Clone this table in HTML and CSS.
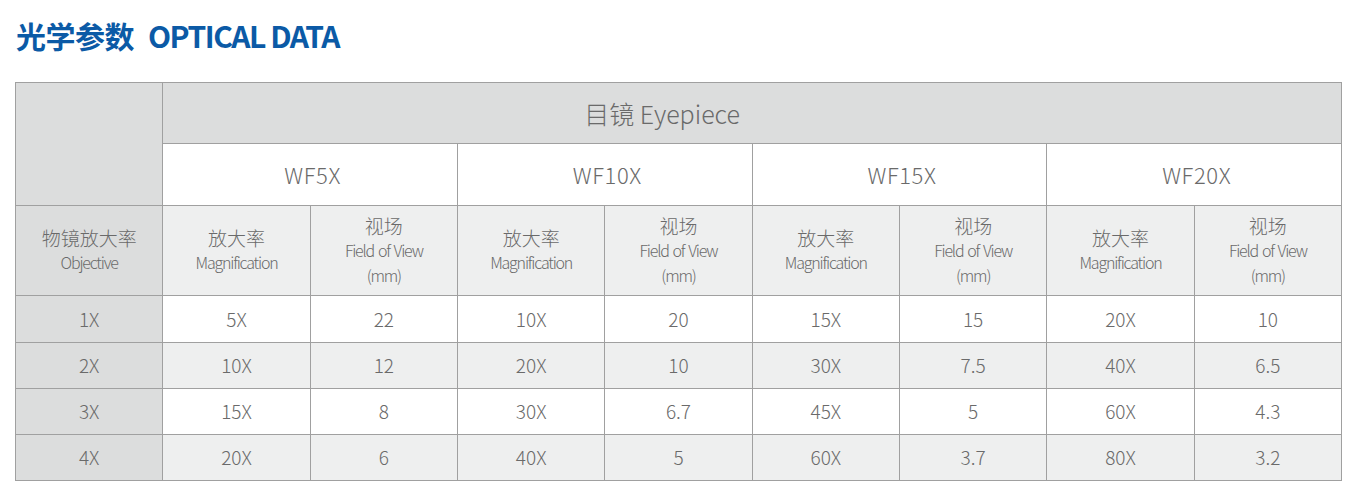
FILE: index.html
```html
<!DOCTYPE html>
<html lang="zh">
<head>
<meta charset="utf-8">
<link rel="stylesheet" href="styles.css">
</head>
<body>
<h1 class="title"><span class="title-cn">光学参数</span><span class="title-en">OPTICAL DATA</span></h1>
<table class="optics">
  <colgroup>
    <col><col><col><col><col><col><col><col><col>
  </colgroup>
  <tr class="r-eyepiece">
    <td class="corner" rowspan="2"></td>
    <td class="eyepiece" colspan="8">目镜 Eyepiece</td>
  </tr>
  <tr class="r-wf">
    <td colspan="2">WF5X</td>
    <td colspan="2">WF10X</td>
    <td colspan="2">WF15X</td>
    <td colspan="2">WF20X</td>
  </tr>
  <tr class="r-sub">
    <td class="obj"><div class="cn">物镜放大率</div><div class="en">Objective</div></td>
    <td><div class="cn">放大率</div><div class="en">Magnification</div></td>
    <td><div class="cn">视场</div><div class="en">Field of View</div><div class="en">(mm)</div></td>
    <td><div class="cn">放大率</div><div class="en">Magnification</div></td>
    <td><div class="cn">视场</div><div class="en">Field of View</div><div class="en">(mm)</div></td>
    <td><div class="cn">放大率</div><div class="en">Magnification</div></td>
    <td><div class="cn">视场</div><div class="en">Field of View</div><div class="en">(mm)</div></td>
    <td><div class="cn">放大率</div><div class="en">Magnification</div></td>
    <td><div class="cn">视场</div><div class="en">Field of View</div><div class="en">(mm)</div></td>
  </tr>
  <tr class="r-data r-first">
    <td class="obj">1X</td><td>5X</td><td>22</td><td>10X</td><td>20</td><td>15X</td><td>15</td><td>20X</td><td>10</td>
  </tr>
  <tr class="r-data alt">
    <td class="obj">2X</td><td>10X</td><td>12</td><td>20X</td><td>10</td><td>30X</td><td>7.5</td><td>40X</td><td>6.5</td>
  </tr>
  <tr class="r-data">
    <td class="obj">3X</td><td>15X</td><td>8</td><td>30X</td><td>6.7</td><td>45X</td><td>5</td><td>60X</td><td>4.3</td>
  </tr>
  <tr class="r-data alt">
    <td class="obj">4X</td><td>20X</td><td>6</td><td>40X</td><td>5</td><td>60X</td><td>3.7</td><td>80X</td><td>3.2</td>
  </tr>
</table>
</body>
</html>
```
FILE: styles.css
```css
html, body {
  margin: 0;
  padding: 0;
  background: #ffffff;
}
body {
  padding: 0 12px 0 15px;
  font-family: "Noto Sans CJK SC", "Noto Sans", sans-serif;
  color: #6a6a6a;
}
.title {
  margin: 0;
  height: 82px;
  box-sizing: border-box;
  padding: 15px 0 0 1px;
  font-family: "Noto Sans CJK SC", sans-serif;
  font-size: 30px;
  line-height: 40px;
  color: #0b5aa6;
  font-weight: 700;
  white-space: nowrap;
}
.title-cn {
  letter-spacing: -0.5px;
}
.title-en {
  letter-spacing: -1.5px;
  margin-left: 14px;
}
.optics {
  width: 1326px;
  border-collapse: collapse;
  table-layout: fixed;
}
.optics col {
  width: 147.33px;
}
.optics td {
  border: 1px solid #a0a0a0;
  text-align: center;
  vertical-align: middle;
  padding: 0;
  font-weight: 300;
  line-height: 1.2;
}
.r-eyepiece td {
  height: 60px;
  background: #dcdddd;
}
.eyepiece {
  font-size: 25px;
  font-weight: 400;
}
.optics td.eyepiece {
  padding: 0 180px 0 0;
}
.corner {
  background: #dcdddd;
}
.r-wf td {
  height: 61px;
  background: #ffffff;
  font-size: 22px;
  letter-spacing: 0.6px;
}
.optics .r-wf td {
  padding: 0 0 0 5px;
}
.r-sub td {
  height: 89px;
  background: #eeefef;
}
.r-sub td.obj {
  background: #dcdddd;
}
.r-sub .cn {
  font-size: 19px;
  line-height: 24px;
}
.r-sub .en {
  font-size: 16px;
  line-height: 25px;
  letter-spacing: -1.2px;
  word-spacing: 1.5px;
}
.r-data td {
  height: 45px;
  background: #ffffff;
  font-size: 19px;
}
.r-data.r-first td {
  height: 46px;
}
.r-data.alt td {
  background: #eeefef;
}
.r-data td.obj {
  background: #dcdddd;
}
```
